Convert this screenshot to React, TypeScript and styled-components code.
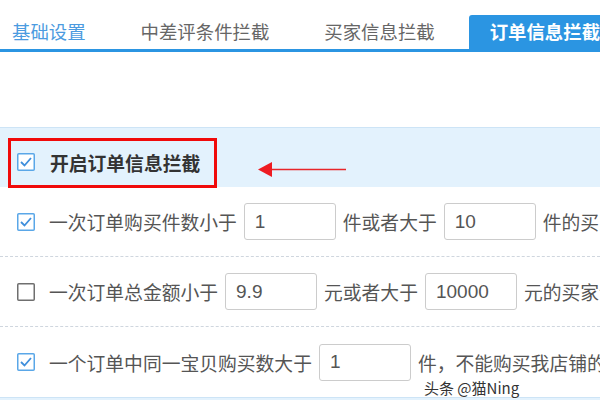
import { FunctionComponent } from "react";
import styled, { createGlobalStyle } from "styled-components";

const GlobalStyle = createGlobalStyle`
  html, body {
    margin: 0;
    padding: 0;
    background: #ffffff;
  }
  body {
    font-family: "Noto Sans CJK SC", "Liberation Sans", sans-serif;
  }
`;

type TabProps = { $active?: boolean; $first?: boolean };

const tabs = ["基础设置", "中差评条件拦截", "买家信息拦截", "订单信息拦截"];

export default function App() {
  return (
    <Page>
      <GlobalStyle />
      <TabBar>
        {tabs.map((t, i) => (
          <Tab key={t} $first={i === 0} $active={i === 3}>
            {t}
          </Tab>
        ))}
      </TabBar>
      <Spacer />
      <TitleRow>
        <RedBox>
          <CheckBox checked />
          <TitleText>开启订单信息拦截</TitleText>
        </RedBox>
        <Arrow width="90" height="18" viewBox="0 0 90 18">
          <line x1="12" y1="8.5" x2="88" y2="8.5" stroke="#e8262a" strokeWidth="1.6" />
          <polygon points="0,8.5 14,1 14,16" fill="#ee1c22" />
        </Arrow>
      </TitleRow>
      <Rule $dashed>
        <CheckBox checked />
        <Label>一次订单购买件数小于</Label>
        <Field defaultValue="1" />
        <Label>件或者大于</Label>
        <Field defaultValue="10" />
        <Label>件的买家订单不予拦截</Label>
      </Rule>
      <Rule $dashed>
        <CheckBox />
        <Label>一次订单总金额小于</Label>
        <Field defaultValue="9.9" />
        <Label>元或者大于</Label>
        <Field defaultValue="10000" />
        <Label>元的买家订单不予拦截</Label>
      </Rule>
      <Rule>
        <CheckBox checked />
        <Label>一个订单中同一宝贝购买数大于</Label>
        <Field defaultValue="1" />
        <Label>件，不能购买我店铺的宝贝</Label>
      </Rule>
      <Footer />
      <Watermark>头条 @猫Ning</Watermark>
    </Page>
  );
}

const CheckBox: FunctionComponent<{ checked?: boolean }> = ({ checked }) => (
  <Box width="18" height="18" viewBox="0 0 18 18">
    <rect
      x="0.75"
      y="0.75"
      width="16.5"
      height="16.5"
      rx="1"
      fill="#ffffff"
      stroke={checked ? "#5aa7e8" : "#6f6f6f"}
      strokeWidth="1.5"
    />
    {checked && (
      <polyline
        points="4,9 7.5,12.5 14,5"
        fill="none"
        stroke="#3f8fdc"
        strokeWidth="1.8"
      />
    )}
  </Box>
);

const Page = styled.div`
  position: relative;
  width: 600px;
  height: 400px;
  overflow: hidden;
  background: #ffffff;
`;

const TabBar = styled.div`
  display: flex;
  align-items: flex-end;
  height: 49px;
  margin-left: -9px;
  border-bottom: 3px solid #2b95e2;
  white-space: nowrap;
`;

const Tab = styled.div<TabProps>`
  flex: none;
  height: 34px;
  line-height: 32px;
  padding: 0 21px;
  margin-right: 13px;
  border-radius: 3px 3px 0 0;
  font-size: 18.4px;
  font-weight: ${({ $active }) => ($active ? 700 : 400)};
  color: ${({ $active, $first }) =>
    $active ? "#ffffff" : $first ? "#4b9be0" : "#666666"};
  background: ${({ $active }) => ($active ? "#2b95e2" : "transparent")};
`;

const Spacer = styled.div`
  height: 75px;
`;

const TitleRow = styled.div`
  position: relative;
  height: 60px;
  border-top: 1px solid #cde4f6;
  background: #e3f2fd;
  padding-left: 8px;
  padding-top: 10px;
  box-sizing: border-box;
`;

const RedBox = styled.div`
  display: flex;
  align-items: center;
  width: 209px;
  height: 50px;
  box-sizing: border-box;
  border: 3px solid #f00a0a;
  padding: 0 0 2px 6px;
  gap: 8px;
`;

const TitleText = styled.span`
  font-size: 18.8px;
  font-weight: 700;
  color: #333333;
  white-space: nowrap;
`;

const Arrow = styled.svg`
  position: absolute;
  left: 258px;
  top: 33px;
`;

const Box = styled.svg`
  flex: none;
  margin-right: 7px;
`;

const Rule = styled.div<{ $dashed?: boolean }>`
  display: flex;
  align-items: center;
  gap: 7px;
  height: 70px;
  box-sizing: border-box;
  padding-left: 17px;
  white-space: nowrap;
  border-bottom: ${({ $dashed }) => ($dashed ? "1px dashed #cfd6de" : "none")};
`;

const Label = styled.span`
  flex: none;
  font-size: 18.8px;
  color: #555555;
`;

const Field = styled.input`
  flex: none;
  width: 92px;
  height: 37px;
  box-sizing: border-box;
  border: 1px solid #cccccc;
  border-radius: 3px;
  padding: 0 10px;
  font-family: "Liberation Sans", "Noto Sans", sans-serif;
  font-size: 19px;
  color: #555555;
  background: #ffffff;
  outline: none;
`;

const Footer = styled.div`
  height: 10px;
  border-top: 1px solid #cde4f6;
  background: #e3f2fd;
`;

const Watermark = styled.div`
  position: absolute;
  left: 424px;
  top: 377px;
  font-size: 15px;
  color: #333333;
  text-shadow: 0 0 2px #ffffff, 0 0 2px #ffffff;
  white-space: nowrap;
`;
